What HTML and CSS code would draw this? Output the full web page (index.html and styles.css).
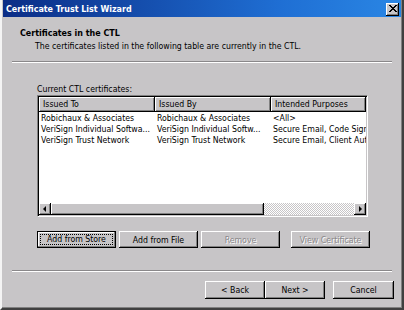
FILE: index.html
```html
<!DOCTYPE html>
<html lang="en">
<head>
  <meta charset="UTF-8">
  <title>Certificate Trust List Wizard</title>
  <link rel="stylesheet" href="styles.css">
</head>
<body>

<div class="window">
  <div class="titlebar">
    <span class="title">Certificate Trust List Wizard</span>
    <span class="close">
      <svg width="9" height="8" viewBox="0 0 9 8">
        <path d="M1 0 L8 7 M8 0 L1 7 M2 0 L9 7 M9 0 L2 7" stroke="#000" stroke-width="1" fill="none"/>
      </svg>
    </span>
  </div>

  <div class="header">
    <div class="heading">Certificates in the CTL</div>
    <div class="subheading">The certificates listed in the following table are currently in the CTL.</div>
  </div>
  <div class="sep top"></div>

  <div class="content">
    <div class="label">Current CTL certificates:</div>
    <div class="list">
      <div class="cols">
        <div class="col c1">Issued To</div>
        <div class="col c2">Issued By</div>
        <div class="col c3">Intended Purposes</div>
      </div>
      <div class="rows">
        <div class="row"><span class="c1">Robichaux &amp; Associates</span><span class="c2">Robichaux &amp; Associates</span><span class="c3">&lt;All&gt;</span></div>
        <div class="row"><span class="c1">VeriSign Individual Softwa...</span><span class="c2">VeriSign Individual Softw...</span><span class="c3">Secure Email, Code Sign</span></div>
        <div class="row"><span class="c1">VeriSign Trust Network</span><span class="c2">VeriSign Trust Network</span><span class="c3">Secure Email, Client Aut</span></div>
      </div>
      <div class="hscroll">
        <div class="arrow"><span class="tri left"></span></div>
        <div class="track"><div class="thumb"></div></div>
        <div class="arrow"><span class="tri right"></span></div>
      </div>
    </div>

    <div class="actions">
      <button class="btn focus"><span>Add from Store</span></button>
      <button class="btn">Add from File</button>
      <button class="btn disabled">Remove</button>
      <button class="btn disabled wide">View Certificate</button>
    </div>
  </div>

  <div class="sep bottom"></div>

  <div class="footer">
    <button class="btn nav">&lt; Back</button>
    <button class="btn nav">Next &gt;</button>
    <button class="btn nav cancel">Cancel</button>
  </div>
</div>

</body>
</html>
```

FILE: styles.css
```css
body {
  margin: 0;
  background: #c7c5c7;
  font-family: "DejaVu Sans", sans-serif;
  font-stretch: condensed;
  font-size: 8.7px;
  color: #000;
}

.window {
  width: 404px;
  height: 310px;
  box-sizing: border-box;
  background: #c7c5c7;
  border-left: 2px solid #f4f4f4;
  border-right: 2px solid #404040;
  border-bottom: 2px solid #404040;
  box-shadow: inset -1px -1px 0 #808080;
  display: flex;
  flex-direction: column;
}

.titlebar {
  height: 17px;
  margin: 0 1px 0 1px;
  background: linear-gradient(to right, #0b2d86, #1f6fd4 70%, #2a86e4);
  display: flex;
  align-items: center;
  justify-content: space-between;
  padding: 0 2px 0 3px;
}

.title {
  color: #fff;
  font-weight: bold;
  font-size: 8.9px;
}

.close {
  width: 13px;
  height: 13px;
  margin-top: 1px;
  background: #c7c5c7;
  box-shadow: inset -1px -1px 0 #000, inset 1px 1px 0 #fff, inset -2px -2px 0 #808080;
  display: flex;
  align-items: center;
  justify-content: center;
}

.header {
  height: 44px;
  padding: 11px 0 0 18px;
  box-sizing: border-box;
}

.heading {
  font-weight: bold;
  font-size: 8.9px;
}

.subheading {
  margin: 3px 0 0 15px;
}

.sep {
  height: 0;
  border-top: 1px solid #8a888a;
  border-bottom: 1px solid #fff;
  margin: 0 10px 0 10px;
}

.content {
  height: 207px;
  padding: 20px 0 0 35px;
  box-sizing: border-box;
}

.label {
  height: 12px;
  line-height: 12px;
}

.list {
  width: 331px;
  height: 122px;
  box-sizing: border-box;
  background: #fff;
  border-top: 1px solid #808080;
  border-left: 1px solid #808080;
  border-right: 1px solid #fff;
  border-bottom: 1px solid #fff;
  box-shadow: inset 1px 1px 0 #000, inset -1px -1px 0 #c7c5c7;
  padding: 1px;
  display: flex;
  flex-direction: column;
  overflow: hidden;
}

.cols {
  display: flex;
  height: 15px;
  flex: none;
}

.col {
  background: #c7c5c7;
  box-sizing: border-box;
  padding: 0 0 0 4px;
  line-height: 14px;
  box-shadow: inset -1px -1px 0 #000, inset 1px 1px 0 #fff, inset -2px -2px 0 #808080;
  white-space: nowrap;
}

.c1, .c2 {
  width: 116px;
  flex: none;
}

.c3 {
  flex: 1;
  overflow: hidden;
  white-space: nowrap;
}

.rows {
  flex: 1;
  padding-top: 1px;
}

.row {
  display: flex;
  height: 11px;
  line-height: 11px;
  white-space: nowrap;
}

.row span {
  padding-left: 2px;
  overflow: hidden;
  box-sizing: border-box;
}

.hscroll {
  height: 12px;
  flex: none;
  display: flex;
}

.arrow {
  width: 12px;
  height: 12px;
  flex: none;
  background: #c7c5c7;
  box-sizing: border-box;
  box-shadow: inset -1px -1px 0 #000, inset 1px 1px 0 #fff, inset -2px -2px 0 #808080;
  display: flex;
  align-items: center;
  justify-content: center;
}

.tri {
  width: 0;
  height: 0;
  border-top: 3px solid transparent;
  border-bottom: 3px solid transparent;
}

.tri.left {
  border-right: 3px solid #000;
  margin-right: 1px;
}

.tri.right {
  border-left: 3px solid #000;
}

.track {
  flex: 1;
  background-color: #e4e2e4;
  background-image: repeating-conic-gradient(#fff 0 25%, #c7c5c7 0 50%);
  background-size: 2px 2px;
}

.thumb {
  width: 213px;
  height: 12px;
  background: #c7c5c7;
  box-shadow: inset -1px -1px 0 #000, inset 1px 1px 0 #fff, inset -2px -2px 0 #808080;
}

.btn {
  font-family: inherit;
  font-stretch: condensed;
  font-size: 8.7px;
  color: #000;
  background: #c7c5c7;
  border: none;
  margin: 0;
  padding: 0;
  height: 17px;
  box-shadow: inset -1px -1px 0 #000, inset 1px 1px 0 #fff, inset -2px -2px 0 #808080;
}

.actions {
  display: flex;
  gap: 3px;
  margin-top: 14px;
}

.actions .btn {
  width: 79px;
}

.actions .btn.wide {
  margin-left: 8px;
}

.btn.focus {
  box-shadow: inset 0 0 0 1px #000, inset -2px -2px 0 #808080, inset 2px 2px 0 #fff;
  padding: 3px;
}

.btn.focus span {
  display: block;
  border: 1px dotted #000;
  height: 9px;
  line-height: 9px;
}

.btn.disabled {
  color: #8a888a;
  text-shadow: 1px 1px 0 #fff;
}

.footer {
  flex: 1;
  display: flex;
  padding: 9px 0 0 203px;
}

.btn.nav {
  width: 60px;
  height: 18px;
}

.btn.cancel {
  margin-left: 8px;
  width: 61px;
}
```
